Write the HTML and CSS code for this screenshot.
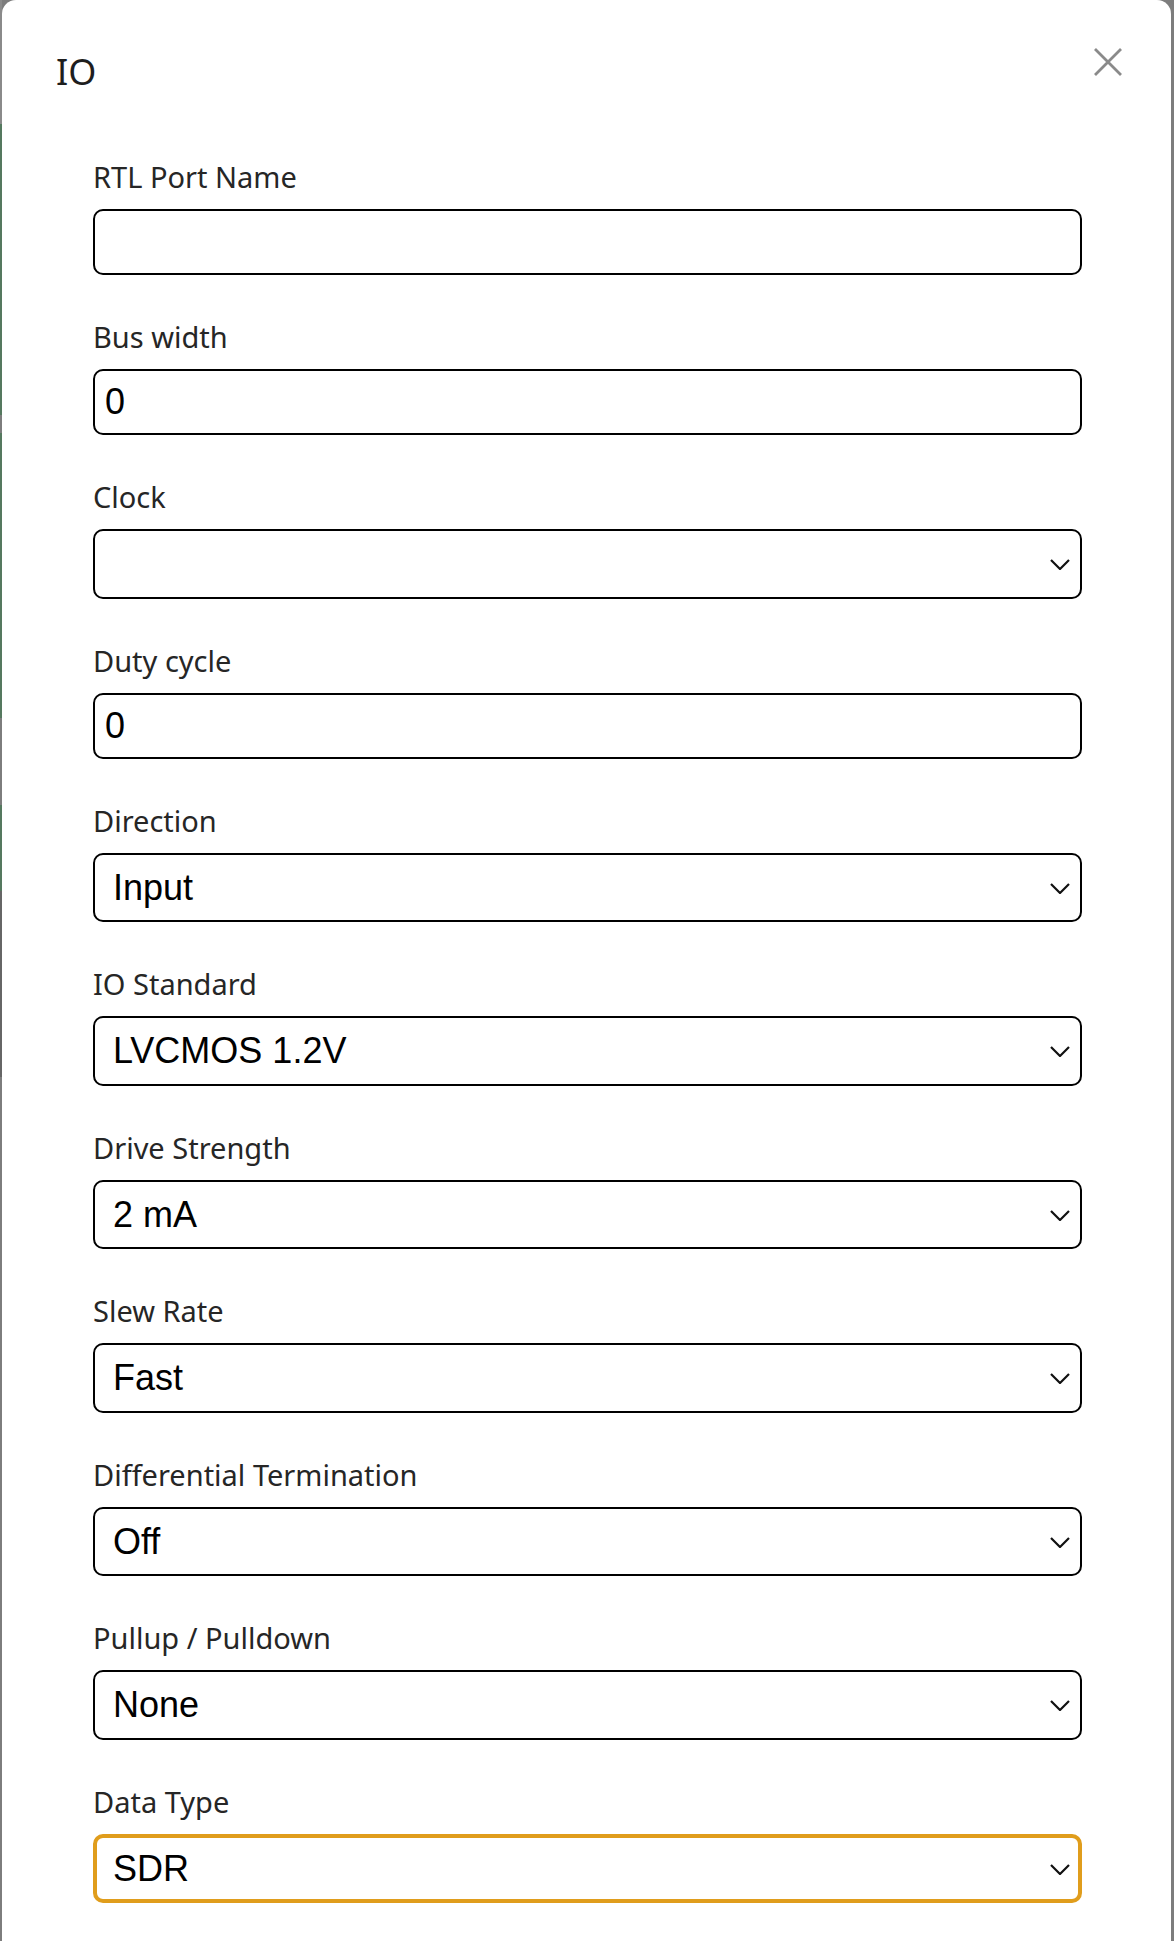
FILE: index.html
```html
<!DOCTYPE html>
<html lang="en">
<head>
<meta charset="utf-8">
<title>IO</title>
<link rel="stylesheet" href="styles.css">
</head>
<body>
<div class="card">
  <div class="header">
    <h1 class="title">IO</h1>
    <button class="close" type="button" aria-label="Close">
      <svg width="28" height="28" viewBox="0 0 28 28"><path d="M1 1 L27 27 M27 1 L1 27" stroke="#8a8a8a" stroke-width="2.8" fill="none"/></svg>
    </button>
  </div>
  <form class="form">
    <div class="field">
      <label class="label">RTL Port Name</label>
      <input class="control input" type="text" value="">
    </div>
    <div class="field">
      <label class="label">Bus width</label>
      <input class="control input" type="text" value="0">
    </div>
    <div class="field">
      <label class="label">Clock</label>
      <div class="select-wrap">
        <select class="control select"><option></option></select>
        <svg class="chev" width="20" height="11" viewBox="0 0 20 11"><path d="M1 1 L10 10 L19 1" stroke="#111" stroke-width="2.2" fill="none"/></svg>
      </div>
    </div>
    <div class="field">
      <label class="label">Duty cycle</label>
      <input class="control input" type="text" value="0">
    </div>
    <div class="field">
      <label class="label">Direction</label>
      <div class="select-wrap">
        <select class="control select"><option>Input</option></select>
        <svg class="chev" width="20" height="11" viewBox="0 0 20 11"><path d="M1 1 L10 10 L19 1" stroke="#111" stroke-width="2.2" fill="none"/></svg>
      </div>
    </div>
    <div class="field">
      <label class="label">IO Standard</label>
      <div class="select-wrap">
        <select class="control select"><option>LVCMOS 1.2V</option></select>
        <svg class="chev" width="20" height="11" viewBox="0 0 20 11"><path d="M1 1 L10 10 L19 1" stroke="#111" stroke-width="2.2" fill="none"/></svg>
      </div>
    </div>
    <div class="field">
      <label class="label">Drive Strength</label>
      <div class="select-wrap">
        <select class="control select"><option>2 mA</option></select>
        <svg class="chev" width="20" height="11" viewBox="0 0 20 11"><path d="M1 1 L10 10 L19 1" stroke="#111" stroke-width="2.2" fill="none"/></svg>
      </div>
    </div>
    <div class="field">
      <label class="label">Slew Rate</label>
      <div class="select-wrap">
        <select class="control select"><option>Fast</option></select>
        <svg class="chev" width="20" height="11" viewBox="0 0 20 11"><path d="M1 1 L10 10 L19 1" stroke="#111" stroke-width="2.2" fill="none"/></svg>
      </div>
    </div>
    <div class="field">
      <label class="label">Differential Termination</label>
      <div class="select-wrap">
        <select class="control select"><option>Off</option></select>
        <svg class="chev" width="20" height="11" viewBox="0 0 20 11"><path d="M1 1 L10 10 L19 1" stroke="#111" stroke-width="2.2" fill="none"/></svg>
      </div>
    </div>
    <div class="field">
      <label class="label">Pullup / Pulldown</label>
      <div class="select-wrap">
        <select class="control select"><option>None</option></select>
        <svg class="chev" width="20" height="11" viewBox="0 0 20 11"><path d="M1 1 L10 10 L19 1" stroke="#111" stroke-width="2.2" fill="none"/></svg>
      </div>
    </div>
    <div class="field">
      <label class="label">Data Type</label>
      <div class="select-wrap">
        <select class="control select focused"><option>SDR</option></select>
        <svg class="chev" width="20" height="11" viewBox="0 0 20 11"><path d="M1 1 L10 10 L19 1" stroke="#111" stroke-width="2.2" fill="none"/></svg>
      </div>
    </div>
  </form>
</div>
</body>
</html>
```
FILE: styles.css
```css
html, body {
  margin: 0;
  padding: 0;
}

body {
  width: 1174px;
  min-height: 1941px;
  overflow: hidden;
  background-color: #7d7d7d;
  background-image: linear-gradient(to bottom,
    #8a8a8a 0px, #8a8a8a 124px,
    #55795f 124px, #55795f 415px,
    #7d7d7d 415px, #7d7d7d 433px,
    #55795f 433px, #55795f 718px,
    #7d7d7d 718px, #7d7d7d 805px,
    #55795f 805px, #55795f 891px,
    #666666 891px, #666666 1077px,
    #7d7d7d 1077px);
  background-size: 2px 100%;
  background-repeat: no-repeat;
  background-position: left top;
}

.card {
  margin: 0 3px 0 2px;
  width: 1169px;
  min-height: 1941px;
  background: #ffffff;
  border-radius: 14px 14px 0 0;
  font-family: "Noto Sans", "Open Sans", sans-serif;
  color: #222222;
}

.header {
  display: flex;
  justify-content: space-between;
  align-items: flex-start;
  padding: 48px 49px 0 54px;
}

.title {
  margin: 0;
  font-size: 36px;
  line-height: 48px;
  font-weight: 400;
  color: #1e1e1e;
}

.close {
  margin: 0;
  padding: 0;
  border: 0;
  background: none;
  width: 28px;
  height: 28px;
  display: block;
}

.close svg {
  display: block;
}

.form {
  display: flex;
  flex-direction: column;
  gap: 42px;
  padding: 61px 89px 0 91px;
}

.field {
  display: flex;
  flex-direction: column;
}

.label {
  display: block;
  font-size: 29px;
  line-height: 40px;
  margin-bottom: 12px;
  color: #262626;
}

.control {
  box-sizing: border-box;
  width: 100%;
  margin: 0;
  border: 2px solid #000000;
  border-radius: 10px;
  background: #ffffff;
  font-family: "Liberation Sans", Arial, sans-serif;
  font-size: 36px;
  color: #000000;
  outline: none;
}

.input {
  height: 66px;
  padding: 0 8px 0 10px;
}

.select-wrap {
  position: relative;
}

.select {
  height: 69.5px;
  padding: 0 50px 0 18px;
  appearance: none;
  -webkit-appearance: none;
  display: block;
}

.select.focused {
  border: 4px solid #e09d1c;
  padding-left: 16px;
}

.chev {
  position: absolute;
  right: 12px;
  top: 30px;
  pointer-events: none;
}
```
